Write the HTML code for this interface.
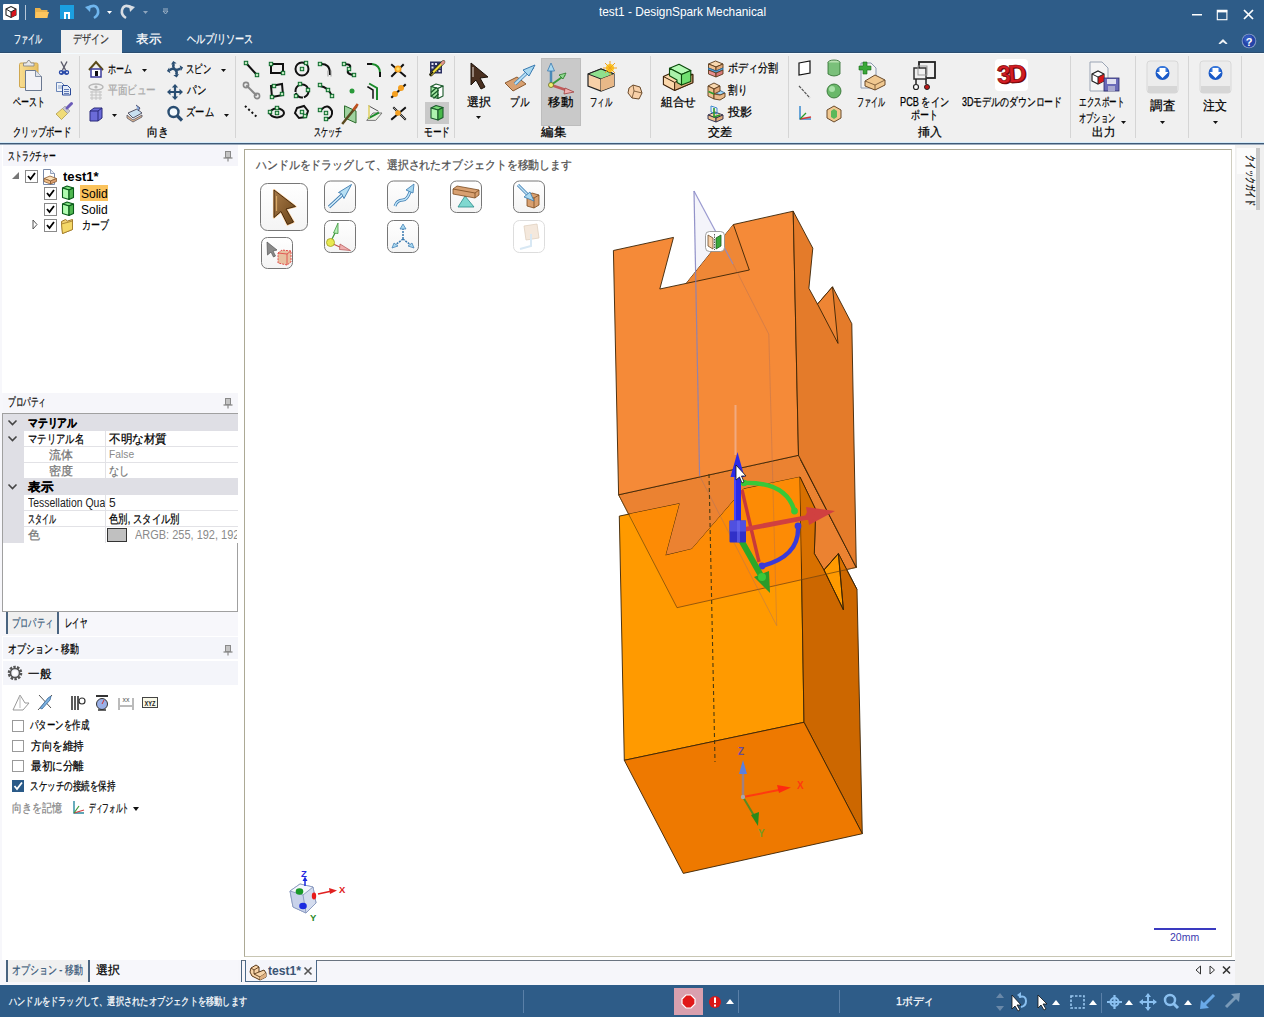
<!DOCTYPE html>
<html><head><meta charset="utf-8">
<style>
*{box-sizing:border-box}
html,body{margin:0;padding:0}
body{width:1264px;height:1017px;overflow:hidden;position:relative;background:#f0f0f0;font-family:"Liberation Sans",sans-serif;font-size:12px;color:#000}
.a{position:absolute}
.t{position:absolute;white-space:nowrap;line-height:1}
.rl{font-size:12px;color:#000}
.t{-webkit-text-stroke:0.25px currentColor}
.ns{-webkit-text-stroke:0}
</style></head><body>
<!-- ===== TITLE BAR ===== -->
<div class="a" style="left:0;top:0;width:1264px;height:52px;background:#2e5c88"></div>
<div class="a" style="left:0;top:52px;width:1264px;height:1px;background:#2b4d70"></div>
<svg class="a" style="left:0;top:0" width="180" height="26">
 <rect x="3" y="4" width="16" height="16" rx="1" fill="#fff"/>
 <path d="M6 9 L11 6.5 L16 9 L16 15 L11 17.5 L6 15 Z" fill="#fff" stroke="#222" stroke-width="1.1"/>
 <path d="M11 12 L16 9 L16 15 L11 17.5 Z" fill="#d8141c"/>
 <path d="M6 9 L11 12 L16 9 M11 12 V17.5" fill="none" stroke="#222" stroke-width="1"/>
 <rect x="25" y="5" width="1" height="15" fill="#b7c7d8"/>
 <path d="M35 8 h5 l1.5 2 h6 v8 h-12.5z" fill="#e9b14d"/>
 <path d="M36 12 h13 l-2 6 h-12z" fill="#fdc55e"/>
 <rect x="60" y="5" width="14" height="14" fill="#1b9fe0"/>
 <rect x="64" y="12" width="6" height="7" fill="#fff"/>
 <rect x="66" y="14" width="2" height="5" fill="#1b9fe0"/>
 <path d="M88 8 Q96 3 98 10 Q99 15 94 18" fill="none" stroke="#6fb6ee" stroke-width="2.6"/>
 <path d="M85 7 L91 5 L90 12 Z" fill="#6fb6ee"/>
 <path d="M107 11 h5 l-2.5 3z" fill="#fff"/>
 <path d="M132 8 Q124 3 122 10 Q121 15 126 18" fill="none" stroke="#d8dde3" stroke-width="2.6"/>
 <path d="M135 7 L129 5 L130 12 Z" fill="#d8dde3"/>
 <path d="M143 11 h5 l-2.5 3z" fill="#8fa6bd"/>
 <path d="M163 9 h5 M163 11 l2.5 3 2.5-3z" stroke="#9fb3c7" fill="none" stroke-width="1"/>
</svg>
<div class="t ns" style="left:599px;top:6px;color:#fff;font-size:12.2px;--w:167px">test1 - DesignSpark Mechanical</div>
<svg class="a" style="left:1180px;top:0" width="84" height="52">
 <rect x="12" y="14" width="10" height="1.5" fill="#fff"/>
 <rect x="37.3" y="10.3" width="9.6" height="9.4" fill="none" stroke="#fff" stroke-width="1.1"/>
 <rect x="37" y="10" width="10.2" height="2.4" fill="#fff"/>
 <path d="M64 10 L73 19 M73 10 L64 19" stroke="#fff" stroke-width="1.7"/>
 <path d="M39 43.5 L43 39.5 L47 43.5 L45.5 43.5 L43 41.5 L40.5 43.5Z" fill="#fff" stroke="#fff" stroke-width="0.8"/>
 <circle cx="69" cy="41" r="7.3" fill="#8aa0c8"/>
 <circle cx="69" cy="41" r="6.4" fill="#2444a8"/>
 <circle cx="68" cy="39" r="4" fill="#3a64c8" opacity="0.7"/>
 <text x="69" y="45.5" font-size="11" font-weight="bold" fill="#fff" text-anchor="middle" font-family="Liberation Sans">?</text>
</svg>
<!-- tabs -->
<div class="t" style="left:14px;top:33px;color:#fff;font-size:12px;--w:28px">ファイル</div>
<div class="a" style="left:61px;top:30px;width:61px;height:24px;background:#f0f0f0"></div>
<div class="t" style="left:73px;top:33px;color:#333;font-size:12px;--w:36px">デザイン</div>
<div class="t" style="left:136px;top:33px;color:#fff;font-size:12px;--w:25px">表示</div>
<div class="t" style="left:187px;top:33px;color:#fff;font-size:12px;--w:66px">ヘルプ/リソース</div>
<!-- ===== RIBBON ===== -->
<div class="a" style="left:0;top:53px;width:1264px;height:1px;background:#f4fbff"></div>
<div class="a" style="left:0;top:142px;width:1264px;height:1px;background:#d6ecfa"></div>
<div class="a" style="left:0;top:143px;width:1264px;height:1px;background:#3f5a78"></div><div class="a" style="left:0;top:144px;width:1264px;height:1px;background:#9aabbd"></div>
<!-- separators -->
<div class="a" style="left:79px;top:56px;width:1px;height:82px;background:#d5d5d5"></div>
<div class="a" style="left:235px;top:56px;width:1px;height:82px;background:#d5d5d5"></div>
<div class="a" style="left:417px;top:56px;width:1px;height:82px;background:#d5d5d5"></div>
<div class="a" style="left:454px;top:56px;width:1px;height:82px;background:#d5d5d5"></div>
<div class="a" style="left:650px;top:56px;width:1px;height:82px;background:#d5d5d5"></div>
<div class="a" style="left:788px;top:56px;width:1px;height:82px;background:#d5d5d5"></div>
<div class="a" style="left:1070px;top:56px;width:1px;height:82px;background:#d5d5d5"></div>
<div class="a" style="left:1135px;top:56px;width:1px;height:82px;background:#d5d5d5"></div>
<div class="a" style="left:1188px;top:56px;width:1px;height:82px;background:#d5d5d5"></div>
<div class="a" style="left:1241px;top:56px;width:1px;height:82px;background:#d5d5d5"></div>
<!-- group labels -->
<div class="t rl" style="left:13px;top:126px;--w:58px">クリップボード</div>
<div class="t rl" style="left:147px;top:126px;--w:22px">向き</div>
<div class="t rl" style="left:314px;top:126px;--w:28px">スケッチ</div>
<div class="t rl" style="left:424px;top:126px;--w:26px">モード</div>
<div class="t rl" style="left:541px;top:126px;--w:25px">編集</div>
<div class="t rl" style="left:708px;top:126px;--w:24px">交差</div>
<div class="t rl" style="left:918px;top:126px;--w:24px">挿入</div>
<div class="t rl" style="left:1092px;top:126px;--w:23px">出力</div>
<!-- clipboard -->
<svg class="a" style="left:0;top:53px" width="80" height="75">
 <defs><linearGradient id="clipg" x1="0" y1="0" x2="1" y2="0"><stop offset="0" stop-color="#f8dc90"/><stop offset="1" stop-color="#e8c060"/></linearGradient></defs>
 <rect x="19.5" y="10" width="18.5" height="24.5" rx="1.5" fill="url(#clipg)" stroke="#d0a850" stroke-width="1"/>
 <path d="M23.5 13 v-3 h3 l1.5 -2.5 h1.5 l1.5 2.5 h3 v3 z" fill="#e8e8e8" stroke="#8a8a8a" stroke-width="0.9"/>
 <path d="M25.5 17.5 h10 l6 6 v14 h-16z" fill="#f2f2f6" stroke="#6a7890" stroke-width="1"/>
 <path d="M35.5 17.5 v6 h6" fill="#dfe3ea" stroke="#6a7890" stroke-width="0.8"/>
 <path d="M61 8.5 L65.5 17 M67 8.5 L62.5 17" stroke="#5a5a6a" stroke-width="1.4"/>
 <ellipse cx="61.5" cy="19.5" rx="2.6" ry="2.4" fill="#2a4aa8"/><ellipse cx="66.5" cy="19.5" rx="2.6" ry="2.4" fill="#2a4aa8"/>
 <circle cx="61" cy="19.3" r="0.9" fill="#fff"/><circle cx="67" cy="19.3" r="0.9" fill="#fff"/>
 <path d="M56.5 29.5 h5 l2.5 2.5 v6.5 h-7.5z" fill="#f0f4fa" stroke="#5a78b0" stroke-width="0.9"/>
 <path d="M58 33 h4 M58 35 h4" stroke="#5a78b0" stroke-width="0.7"/>
 <path d="M62.5 32.5 h5 l3 3 v6.5 h-8z" fill="#e4ecf8" stroke="#2a4a98" stroke-width="1"/>
 <path d="M64 36.5 h5 M64 38.5 h5 M64 40.5 h5" stroke="#2a4a98" stroke-width="0.7"/>
 <path d="M56 61 L62.5 55.5 L67.5 60.5 L61.5 66.5 Z" fill="#f0dc78" stroke="#a89040" stroke-width="0.7"/>
 <path d="M62.5 55.5 L65 53 L70 58 L67.5 60.5Z" fill="#c8c8d0" stroke="#888" stroke-width="0.5"/>
 <path d="M67 55 L71.5 50.5" stroke="#6a5ab8" stroke-width="3" stroke-linecap="round"/>
</svg>
<div class="t rl" style="left:13px;top:96px;--w:32px">ペースト</div>
<!-- orientation -->
<svg class="a" style="left:80px;top:53px" width="155" height="75">
 <path d="M9 17 L16 9 L23 17" fill="none" stroke="#5a4a1a" stroke-width="2"/>
 <rect x="11" y="16" width="10" height="8" fill="#fff" stroke="#3a3a9a" stroke-width="1.5"/>
 <rect x="15" y="18" width="3" height="5" fill="#111"/>
 <path d="M62 16 l5 0 -2.5 3z" fill="#111"/>
 <ellipse cx="16" cy="34" rx="7" ry="3" fill="none" stroke="#b8b8b8" stroke-width="1.5"/>
 <circle cx="16" cy="34" r="1.6" fill="#b8b8b8"/>
 <path d="M10 39 h12 M10 42 h12 M10 45 h12 M12 38 v9 M16 38 v9 M20 38 v9" stroke="#c4c4c4" stroke-width="1"/>
 <path d="M10 58 L14 55 L22 55 L22 65 L18 68 L10 68 Z" fill="#6b6bd8" stroke="#2a2a7a" stroke-width="1"/>
 <path d="M10 58 L18 58 L22 55 M18 58 V68" fill="none" stroke="#2a2a7a" stroke-width="1"/>
 <path d="M32 61 l5 0 -2.5 3z" fill="#111"/>
 <path d="M48 60 L57 56 L62 60 L53 65 Z" fill="#c8e0f0" stroke="#556" stroke-width="1"/>
 <path d="M47 62 L53 67 L62 62 L62 64 L53 69 L47 65Z" fill="#e0b890" stroke="#556" stroke-width="0.8"/>
 <path d="M56 52 L60 55 L58 58" fill="#88aadd" stroke="#335" stroke-width="0.8"/>
 <g transform="translate(95 16.3) scale(0.72) rotate(-12) translate(-95 -16.3)">
  <path d="M95 16.3 Q92 12 95 8.5 M95 16.3 Q99 19 102.5 16.3 M95 16.3 Q98 20.5 95 24 M95 16.3 Q91 13.5 87.5 16.3" fill="none" stroke="#2a4e72" stroke-width="3.4"/>
  <path d="M91 8.5 L99 8.5 L95 4.5Z M102.5 12.3 L102.5 20.3 L106.5 16.3Z M91 24 L99 24 L95 28Z M87.5 12.3 L87.5 20.3 L83.5 16.3Z" fill="#2a4e72"/>
 </g>
 <path d="M141 16 l5 0 -2.5 3z" fill="#111"/>
 <path d="M95 33 V45 M89 39 H101" stroke="#2a4e72" stroke-width="2.2"/>
 <path d="M95 31 l-3.2 3.5 6.4 0z M95 47 l-3.2 -3.5 6.4 0z M87 39 l3.5 -3.2 0 6.4z M103 39 l-3.5 -3.2 0 6.4z" fill="#2a4e72"/>
 <circle cx="93.5" cy="59" r="5" fill="#f4fbff" stroke="#2a4e72" stroke-width="2.4"/>
 <path d="M97.5 63 L102 67.5" stroke="#2a4e72" stroke-width="3.2"/>
 <path d="M144 61 l5 0 -2.5 3z" fill="#111"/>
</svg>
<div class="t rl" style="left:108px;top:63px;--w:24px">ホーム</div>
<div class="t rl" style="left:108px;top:84px;color:#a8a8a8;--w:48px">平面ビュー</div>
<div class="t rl" style="left:186px;top:63px;--w:25px">スピン</div>
<div class="t rl" style="left:187px;top:84px;--w:19px">パン</div>
<div class="t rl" style="left:186px;top:106px;--w:28px">ズーム</div>
<!-- sketch -->
<svg class="a" style="left:236px;top:53px" width="218" height="75" stroke-linecap="square">
 <defs><g id="gs"><rect x="-1.7" y="-1.7" width="3.4" height="3.4" fill="#bfe8bf" stroke="#0a6a2a" stroke-width="1"/></g></defs>
 <!-- row1 -->
 <path d="M10 10 L21 22" stroke="#111" stroke-width="2"/><use href="#gs" x="10" y="10"/><use href="#gs" x="21" y="22"/>
 <rect x="35" y="11" width="12" height="9" fill="none" stroke="#111" stroke-width="2"/><use href="#gs" x="35" y="11"/><use href="#gs" x="47" y="20"/>
 <circle cx="66" cy="16" r="6.5" fill="none" stroke="#111" stroke-width="2"/><use href="#gs" x="66" y="16"/><use href="#gs" x="70" y="10"/>
 <path d="M84 11 Q94 10 94 21" fill="none" stroke="#111" stroke-width="2"/><use href="#gs" x="84" y="11"/><path d="M92 18 v5 M95 18 v5" stroke="#999" stroke-width="1"/>
 <path d="M108 11 Q117 11 113 16 Q109 21 118 22" fill="none" stroke="#111" stroke-width="2"/><use href="#gs" x="108" y="11"/><use href="#gs" x="113" y="16"/><use href="#gs" x="118" y="22"/>
 <path d="M132 11 h4 Q144 12 144 20 v3" fill="none" stroke="#1a8a2a" stroke-width="2"/><path d="M132 11h3 M144 20 v3" stroke="#111" stroke-width="2"/>
 <path d="M156 12 L169 23 M167 12 L156 23" stroke="#111" stroke-width="2"/><circle cx="162" cy="16" r="3.5" fill="#f5a020"/><circle cx="162" cy="16" r="1.8" fill="#ffe060"/>
 <!-- row2 -->
 <path d="M11 33 L20 42" stroke="#888" stroke-width="2"/><circle cx="10" cy="32" r="2.6" fill="none" stroke="#888" stroke-width="1.6"/><circle cx="21" cy="43" r="2.6" fill="none" stroke="#888" stroke-width="1.6"/>
 <path d="M35 33 L46 31 L47 42 L36 44 Z" fill="none" stroke="#111" stroke-width="2"/><use href="#gs" x="38" y="33"/><use href="#gs" x="46" y="41"/><use href="#gs" x="36" y="44"/>
 <circle cx="66" cy="38" r="6.5" fill="none" stroke="#111" stroke-width="2" stroke-dasharray="7 3"/><use href="#gs" x="60" y="43"/><use href="#gs" x="72" y="37"/><use href="#gs" x="64" y="31"/>
 <path d="M84 33 Q92 34 96 43" fill="none" stroke="#111" stroke-width="2"/><use href="#gs" x="84" y="32"/><use href="#gs" x="92" y="37"/><use href="#gs" x="96" y="43"/>
 <circle cx="116" cy="38" r="2.5" fill="#2a9a3a"/>
 <path d="M132 34 l5 3 v8" fill="none" stroke="#111" stroke-width="1.5"/><path d="M134 31 l7 4 v11" fill="none" stroke="#1a8a2a" stroke-width="2"/>
 <path d="M156 44 L169 32" stroke="#111" stroke-width="2"/><circle cx="159" cy="41" r="3" fill="#f5a020"/><circle cx="165" cy="35" r="3" fill="#f5a020"/>
 <!-- row3 -->
 <path d="M9 53 L22 65" stroke="#111" stroke-width="2" stroke-dasharray="2 2.5" stroke-linecap="butt"/>
 <ellipse cx="41" cy="60" rx="7" ry="4.5" fill="none" stroke="#111" stroke-width="2"/><use href="#gs" x="34" y="59"/><use href="#gs" x="41" y="60"/><use href="#gs" x="41" y="55"/>
 <path d="M61 55 L68 53 L72 58 L70 64 L63 65 L59 60Z" fill="none" stroke="#111" stroke-width="2"/><use href="#gs" x="66" y="59"/><use href="#gs" x="69" y="63"/>
 <path d="M86 56 Q92 50 96 58 Q97 65 90 66" fill="none" stroke="#111" stroke-width="2"/><use href="#gs" x="84" y="57"/><use href="#gs" x="90" y="60"/><use href="#gs" x="90" y="66"/>
 <path d="M109 53 L120 58 L120 70 L109 65 Z" fill="#9fd29f" stroke="#2a6a2a" stroke-width="1"/><path d="M107 70 L120 54" stroke="#5a4a20" stroke-width="2.5"/><path d="M118 56 L121 52" stroke="#c05020" stroke-width="2.5"/>
 <path d="M131 67 L137 60 L146 60 L140 67 Z" fill="#e8f0e0" stroke="#777" stroke-width="1"/><path d="M133 65 L142 60" stroke="#1a8a2a" stroke-width="2"/><path d="M133 53 L142 58" stroke="#555" stroke-width="1"/><path d="M133 53 v12" stroke="#e0d060" stroke-width="1.5"/>
 <path d="M156 66 L169 55 M158 55 L169 66" stroke="#111" stroke-width="2"/><path d="M158 55 L169 66" stroke="#999" stroke-width="1"/><circle cx="162" cy="60" r="2.8" fill="#f5a020"/>
 <!-- mode -->
 <rect x="189" y="49" width="24" height="22" fill="#c9c9c9"/>
 <rect x="194" y="8.5" width="12" height="12" fill="#2a3060"/>
 <path d="M195.5 10 h2 v2 h-2z M199 10 h2 v2 h-2z M195.5 13.5 h2 v2 h-2z M202.5 13.5 h2 v2 h-2z M199 17 h2 v2 h-2z M202.5 17 h2 v2 h-2z" fill="#e0e0f0"/>
 <path d="M195 21.5 L207.5 9" stroke="#2a2a10" stroke-width="3.6" stroke-linecap="round"/>
 <path d="M195.5 21 L207 9.5" stroke="#f0e040" stroke-width="2.2"/>
 <path d="M206 10.5 L207.5 9" stroke="#e09090" stroke-width="2.4"/>
 <path d="M194.5 21.5 L196.5 19.5" stroke="#111" stroke-width="1.5"/>
 <g stroke="#1a5a2a" stroke-width="1.1" stroke-linejoin="round">
  <path d="M195 33.5 L200 31 L207 33 L202 35.5 Z" fill="#fff"/>
  <path d="M195 33.5 L202 35.5 V45.5 L195 43.5 Z" fill="#a8eca8"/>
  <path d="M202 35.5 L207 33 V43 L202 45.5 Z" fill="#fff"/>
 </g>
 <path d="M195.5 39 L200 35 M195.5 43 L202 37.5 M198 45 L202 41.5" stroke="#1a5a2a" stroke-width="1.4"/>
 <g stroke="#1a5a2a" stroke-width="1.1" stroke-linejoin="round">
  <path d="M195 55 L200 52.5 L207 54.5 L202 57 Z" fill="#78d878"/>
  <path d="M195 55 L202 57 V67 L195 65 Z" fill="#aef4ae"/>
  <path d="M202 57 L207 54.5 V64.5 L202 67 Z" fill="#4ab84a"/>
 </g>
</svg>
<!-- edit -->
<div class="a" style="left:541px;top:58px;width:40px;height:68px;background:#c9c9c9;border:1px solid #bdbdbd"></div>
<svg class="a" style="left:455px;top:53px" width="195" height="75">
 <path d="M16 10 L33 24 L25 25 L30 34 L26 36 L21 27 L16 32 Z" fill="#4a3020" stroke="#1a1008" stroke-width="1"/>
 <path d="M18 14 v10" stroke="#e0d8d0" stroke-width="1"/>
 <path d="M50 30 L62 24 L71 31 L58 38 Z" fill="#d8a070" stroke="#8a5a30" stroke-width="1"/>
 <path d="M60 31 L78 14" stroke="#4a8ab8" stroke-width="3.5"/><path d="M60 31 L78 14" stroke="#b8e0f8" stroke-width="1.8"/><path d="M80 12 L68 17 L74 23 Z" fill="#a8d8f0" stroke="#3a7ab0" stroke-width="1"/>
 <path d="M96 32 V14" stroke="#4a8ab8" stroke-width="2.5"/><path d="M96 10 l-3.5 8 7 0z" fill="#a8d8f0" stroke="#3a7ab0" stroke-width="0.8"/>
 <path d="M96 32 L110 22" stroke="#3a9a3a" stroke-width="2"/><path d="M111 20 l-7 2 4 4z" fill="#8fd88f" stroke="#2a7a2a" stroke-width="0.8"/>
 <path d="M96 32 L114 38" stroke="#c05a5a" stroke-width="2.5"/><path d="M119 39 l-9 -4 -1 6z" fill="#f0b0b0" stroke="#a04040" stroke-width="0.8"/>
 <circle cx="96" cy="32" r="2.5" fill="#f0f070" stroke="#6a6a20" stroke-width="0.8"/>
 <path d="M133 21 L146 16 L159 21 L159 33 L146 38 L133 33 Z" fill="#f8d0a8" stroke="#222" stroke-width="1.2"/>
 <path d="M133 21 L146 16 L159 21 L146 26 Z" fill="#8ee08e" stroke="#222" stroke-width="1"/><path d="M146 26 V38" stroke="#222" stroke-width="1"/><path d="M146 26 L159 21 V33 L146 38Z" fill="#e8b888"/>
 <circle cx="155" cy="15" r="4" fill="#ffd020"/><path d="M155 8 v14 M148 15 h14 M150 10 l10 10 M160 10 l-10 10" stroke="#f0a020" stroke-width="1"/>
 <path d="M174 35 L178 32 L185 34 L187 40 L184 46 L177 45 L173 40 Z" fill="#f8d0a8" stroke="#6a4a2a" stroke-width="1"/><path d="M178 32 L179 38 L187 40 M179 38 L177 45" stroke="#6a4a2a" stroke-width="0.8" fill="none"/>
 <path d="M21 63 l5 0 -2.5 3z" fill="#111"/>
</svg>
<div class="t rl" style="left:467px;top:96px;--w:24px">選択</div>
<div class="t rl" style="left:510px;top:96px;--w:19px">プル</div>
<div class="t rl" style="left:548px;top:96px;--w:25px">移動</div>
<div class="t rl" style="left:590px;top:96px;--w:22px">フィル</div>
<!-- intersect -->
<svg class="a" style="left:651px;top:53px" width="137" height="75">
 <g stroke-linejoin="round">
 <path d="M12.4,23.5 L18,21 L41.8,21.4 L41.8,29.7 L23.6,37.4 L12.4,31.5 Z" fill="#fcd8ac" stroke="#3a2008" stroke-width="1.1"/>
 <path d="M23.6,29.4 L41.8,21.4 L41.8,29.7 L23.6,37.4 Z" fill="#e0b080" stroke="#3a2008" stroke-width="1"/>
 <path d="M12.4,23.5 L23.6,29.4" stroke="#3a2008" stroke-width="1"/>
 <path d="M18.5,15.2 L28,11.2 L39.8,17.5 L30.5,21.4 Z" fill="#b4fab4" stroke="#0a4a0a" stroke-width="1.1"/>
 <path d="M18.5,15.2 L30.5,21.4 L30.5,31.9 L26,29.5 L26,27 L18.5,22.8 Z" fill="#aaf2aa" stroke="#0a4a0a" stroke-width="1.1"/>
 <path d="M30.5,21.4 L39.8,17.5 L39.8,28.6 L30.5,31.9 Z" fill="#70e070" stroke="#0a4a0a" stroke-width="1.1"/>
 </g>
 <g stroke="#5a3a1a" stroke-width="0.9" stroke-linejoin="round">
 <path d="M57.5 11 L64.5 8 L72 11 L65 14 Z" fill="#f8d8b0"/>
 <path d="M57.5 11 L65 14 V18 L57.5 15 Z" fill="#f0c090"/><path d="M65 14 L72 11 V15 L65 18 Z" fill="#e0a878"/>
 <path d="M57.5 15 L65 18 L72 15 V17 L65 20 L57.5 17 Z" fill="#5aaae0" stroke="#2a6a9a"/>
 <path d="M57.5 17 L65 20 V24 L57.5 21 Z" fill="#e89090"/><path d="M65 20 L72 17 V21 L65 24 Z" fill="#d87878"/>
 <path d="M57 33 L63 30 L69 33 L63 36 Z" fill="#f8d8b0"/>
 <path d="M57 33 L63 36 V46 L57 43 Z" fill="#f0c090"/>
 <path d="M63 39 L68 37 L74 40 L69 42 Z" fill="#a0d8f8" stroke="#3a6a9a"/>
 <path d="M63 36 L69 33 V38 L63 41 Z" fill="#e0a878"/>
 <path d="M63 41 L69 42 L74 40 V44 L69 47 L63 46 Z" fill="#e8b888"/>
 <path d="M57.5 38.5 L63 41" stroke="#2a9a2a" stroke-width="1.6"/>
 <path d="M57 62 L64 59 L72 62 L65 65 Z" fill="#f8d8b0" stroke="#2a2a4a"/>
 <path d="M57 62 L65 65 V69 L57 66 Z" fill="#f0c090" stroke="#2a2a4a"/><path d="M65 65 L72 62 V66 L65 69 Z" fill="#e0a878" stroke="#2a2a4a"/>
 </g>
 <path d="M60 53 L66 55 L66 61 L60 59 Z" fill="none" stroke="#3a8ad0" stroke-width="1"/>
 <path d="M63 55 V64 L69 62" fill="none" stroke="#2a9a2a" stroke-width="1.6"/>
</svg>
<div class="t rl" style="left:661px;top:96px;--w:35px">組合せ</div>
<div class="t rl" style="left:728px;top:62px;--w:50px">ボディ分割</div>
<div class="t rl" style="left:728px;top:84px;--w:19px">割り</div>
<div class="t rl" style="left:728px;top:106px;--w:24px">投影</div>
<!-- insert -->
<svg class="a" style="left:789px;top:53px" width="281" height="75">
 <path d="M10 10 L21 8 L21 20 L10 22 Z" fill="#fff" stroke="#111" stroke-width="1.2"/>
 <path d="M10 33 L21 45" stroke="#555" stroke-width="1.2" stroke-dasharray="3 1"/>
 <path d="M11 53 V66 L22 66" fill="none" stroke="#3a8ad0" stroke-width="1.5"/><path d="M11 66 L22 64" stroke="#d03a3a" stroke-width="1.5"/><path d="M11 66 L17 60" stroke="#2a9a2a" stroke-width="1.2"/>
 <ellipse cx="45" cy="9.5" rx="6" ry="2.5" fill="#b8e0b0" stroke="#2a6a2a" stroke-width="0.8"/><path d="M39 9.5 V21 Q45 25 51 21 V9.5" fill="#7ac07a" stroke="#2a6a2a" stroke-width="0.8"/>
 <circle cx="45" cy="38" r="7" fill="#6ab86a" stroke="#2a6a2a" stroke-width="0.8"/><circle cx="43" cy="36" r="3" fill="#a8e0a8"/>
 <path d="M38 57 L45 53 L52 57 V65 L45 69 L38 65 Z" fill="#f0c890" stroke="#6a4a2a" stroke-width="1"/><path d="M42 58 L45 56 L48 58 V64 L45 66 L42 64Z" fill="#5ab85a"/>
 <path d="M72 10 h10 l5 5 v20 h-15 z" fill="#f4f4f4" stroke="#8a98ad" stroke-width="1"/>
 <path d="M70 13 h4 v-4 h4 v4 h4 v4 h-4 v4 h-4 v-4 h-4z" fill="#3aa83a" stroke="#1a6a1a" stroke-width="0.6"/>
 <path d="M76 28 L86 22 L96 27 L96 32 L86 37 L76 33 Z" fill="#f0c890" stroke="#6a4a2a" stroke-width="1"/><path d="M76 28 L86 32 L96 27 M86 32 V37" fill="none" stroke="#6a4a2a" stroke-width="0.8"/>
 <rect x="130" y="9" width="16" height="16" fill="none" stroke="#222" stroke-width="1.8"/>
 <rect x="125" y="15" width="12" height="11" fill="#f0f0f0" stroke="#333" stroke-width="1.5"/>
 <rect x="129" y="13" width="9" height="9" fill="none" stroke="#999" stroke-width="1"/>
 <path d="M127 26 v5 M137 26 v5" stroke="#222" stroke-width="1.5"/>
 <circle cx="127" cy="34" r="2.5" fill="#fff" stroke="#222" stroke-width="1.2"/><circle cx="138" cy="34" r="2.5" fill="#c01818" stroke="#222" stroke-width="1"/>
 <rect x="206" y="6" width="33" height="32" rx="4" fill="#fff"/>
 <text x="222.5" y="30.5" font-family="Liberation Sans" font-weight="bold" font-size="25" fill="#6a0808" text-anchor="middle" letter-spacing="-2.5" transform="rotate(-4 222 24)">3D</text>
 <text x="221.5" y="29.5" stroke="#7a0a0a" stroke-width="0.6" font-family="Liberation Sans" font-weight="bold" font-size="25" fill="#d41c24" text-anchor="middle" letter-spacing="-2.5" transform="rotate(-4 222 24)">3D</text>
</svg>
<div class="t rl" style="left:857px;top:96px;--w:28px">ファイル</div>
<div class="t rl" style="left:900px;top:96px;--w:49px">PCB をイン</div>
<div class="t rl" style="left:911px;top:109px;--w:27px">ポート</div>
<div class="t rl" style="left:962px;top:96px;--w:100px">3Dモデルのダウンロード</div>
<!-- output -->
<svg class="a" style="left:1071px;top:53px" width="193" height="75">
 <path d="M19 9 h12 l6 6 v23 h-18 z" fill="#f4f4f4" stroke="#9aa4b4" stroke-width="1"/>
 <path d="M21 21 L27 18 L33 21 L33 28 L27 31 L21 28 Z" fill="#fff" stroke="#222" stroke-width="1.2"/><path d="M27 24 L33 21 V28 L27 31Z" fill="#d81818"/><path d="M21 21 L27 24 L33 21 M27 24 V31" fill="none" stroke="#222" stroke-width="1"/>
 <rect x="33" y="25" width="15" height="13" fill="#6a6ab8" stroke="#2a2a6a" stroke-width="0.8"/><rect x="36" y="26" width="9" height="5" fill="#e0e0f0"/><rect x="37" y="33" width="7" height="5" fill="#a8a8d0"/>
 <path d="M50 68 l5 0 -2.5 3z" fill="#111"/>
 <rect x="76" y="8" width="31" height="32" rx="3" fill="#ececec" stroke="#d8d8d8" stroke-width="1"/><rect x="77" y="33" width="29" height="7" fill="#d6d6d6"/>
 <circle cx="91.5" cy="20" r="7" fill="#1a5ac8"/><circle cx="91.5" cy="18" r="5" fill="#4a8ae8" opacity="0.6"/><path d="M88.5 15 h6 v4 h3 l-6 6 -6 -6 h3z" fill="#fff"/>
 <path d="M89 68 l5 0 -2.5 3z" fill="#111"/>
 <rect x="129" y="8" width="31" height="32" rx="3" fill="#ececec" stroke="#d8d8d8" stroke-width="1"/><rect x="130" y="33" width="29" height="7" fill="#d6d6d6"/>
 <circle cx="144.5" cy="20" r="7" fill="#1a5ac8"/><circle cx="144.5" cy="18" r="5" fill="#4a8ae8" opacity="0.6"/><path d="M141.5 15 h6 v4 h3 l-6 6 -6 -6 h3z" fill="#fff"/>
 <path d="M142 68 l5 0 -2.5 3z" fill="#111"/>
</svg>
<div class="t rl" style="left:1079px;top:96px;--w:45px">エクスポート</div>
<div class="t rl" style="left:1079px;top:112px;--w:36px">オプション</div>
<div class="t rl" style="left:1150px;top:99px;font-size:13px;--w:25px">調査</div>
<div class="t rl" style="left:1203px;top:99px;font-size:13px;--w:24px">注文</div>
<!-- ===== LEFT PANEL ===== -->
<div class="a" style="left:0;top:145px;width:244px;height:840px;background:#f7f7fb"></div><div class="a" style="left:238px;top:145px;width:6px;height:815px;background:#fff"></div>
<div class="a" style="left:2px;top:145px;width:238px;height:248px;background:#fff"></div>
<div class="a" style="left:3px;top:145px;width:235px;height:21px;background:#f5f5fa"></div>
<div class="t rl" style="left:8px;top:150px;--w:48px">ストラクチャー</div>
<svg class="a" style="left:222px;top:150px" width="12" height="12"><rect x="3.5" y="1.5" width="5" height="6" fill="#c4c4c4" stroke="#8a8a8a" stroke-width="1"/><path d="M1.5 8 h9" stroke="#8a8a8a" stroke-width="1.3"/><path d="M6 8 v3.5" stroke="#8a8a8a" stroke-width="1.2"/></svg>
<!-- tree -->
<svg class="a" style="left:0;top:166px" width="240" height="70">
 <path d="M19 6 L19 13 L12 13 Z" fill="#777"/>
 <rect x="25.5" y="4.5" width="12" height="12" fill="#fff" stroke="#8a8a8a"/>
 <path d="M28 10 L30.5 13 L35 7" fill="none" stroke="#000" stroke-width="1.8"/>
 <path d="M43.5 3.5 h7 l4 4 v11 h-11z" fill="#fff" stroke="#7a8aa8" stroke-width="1"/>
 <path d="M50.5 3.5 v4 h4" fill="#e8ecf4" stroke="#7a8aa8" stroke-width="0.8"/>
 <path d="M44 12.5 L50 10 L56.5 12.5 L50.5 15 Z" fill="#fce0b8" stroke="#8a5a30" stroke-width="0.8"/>
 <path d="M44 12.5 L50.5 15 V18 L44 15.5Z" fill="#f0c08a" stroke="#8a5a30" stroke-width="0.8"/>
 <path d="M50.5 15 L56.5 12.5 V15.5 L50.5 18Z" fill="#dca070" stroke="#8a5a30" stroke-width="0.8"/>
 <rect x="44.5" y="21.5" width="12" height="12" fill="#fff" stroke="#8a8a8a"/>
 <path d="M47 27 L49.5 30 L54 24" fill="none" stroke="#000" stroke-width="1.8"/>
 <g stroke="#0a5a1a" stroke-width="1.1" stroke-linejoin="round"><path d="M62.5 22 L67 20 L73.5 22 L69 24 Z" fill="#80e080"/><path d="M62.5 22 L69 24 V33.5 L62.5 31.5 Z" fill="#b0fcb0"/><path d="M69 24 L73.5 22 V31.5 L69 33.5 Z" fill="#50b850"/></g>
 <rect x="44.5" y="37.5" width="12" height="12" fill="#fff" stroke="#8a8a8a"/>
 <path d="M47 43 L49.5 46 L54 40" fill="none" stroke="#000" stroke-width="1.8"/>
 <g stroke="#0a5a1a" stroke-width="1.1" stroke-linejoin="round"><path d="M62.5 38 L67 36 L73.5 38 L69 40 Z" fill="#80e080"/><path d="M62.5 38 L69 40 V49.5 L62.5 47.5 Z" fill="#b0fcb0"/><path d="M69 40 L73.5 38 V47.5 L69 49.5 Z" fill="#50b850"/></g>
 <path d="M33 54 L37 58.5 L33 63 Z" fill="#fff" stroke="#555" stroke-width="1"/>
 <rect x="44.5" y="53.5" width="12" height="12" fill="#fff" stroke="#8a8a8a"/>
 <path d="M47 59 L49.5 62 L54 56" fill="none" stroke="#000" stroke-width="1.8"/>
 <path d="M61.5 55.5 l4 -2 l2 1.5 l5 -1.5 v10 l-10 4 z" fill="#f0d070" stroke="#a07828" stroke-width="1"/>
 <path d="M61.5 58 l11 -3 v8.5 l-10 4 z" fill="#f4d868" stroke="#a07828" stroke-width="0.8"/>
</svg>
<div class="t ns" style="left:63px;top:171px;font-weight:bold;font-size:12px;--w:36px">test1*</div>
<div class="a" style="left:80px;top:185px;width:28px;height:16px;background:#fbc35c"></div>
<div class="t ns" style="left:81px;top:188px;font-size:12px;--w:27px">Solid</div>
<div class="t ns" style="left:81px;top:204px;font-size:12px;--w:27px">Solid</div>
<div class="t" style="left:82px;top:219px;font-size:12px;--w:27px">カーブ</div>
<!-- properties -->
<div class="a" style="left:3px;top:393px;width:235px;height:19px;background:#f6f6fa"></div>
<div class="t rl" style="left:8px;top:396px;--w:38px">プロパティ</div>
<svg class="a" style="left:222px;top:397px" width="12" height="12"><rect x="3.5" y="1.5" width="5" height="6" fill="#c4c4c4" stroke="#8a8a8a" stroke-width="1"/><path d="M1.5 8 h9" stroke="#8a8a8a" stroke-width="1.3"/><path d="M6 8 v3.5" stroke="#8a8a8a" stroke-width="1.2"/></svg>
<div class="a" style="left:2px;top:413px;width:236px;height:199px;background:#fff;border:1px solid #a0a0a0"></div>
<div class="a" style="left:3px;top:414px;width:235px;height:129px;background:#dfdfe5"></div>
<div class="a" style="left:24px;top:431px;width:214px;height:47px;background:#fff"></div>
<div class="a" style="left:24px;top:495px;width:214px;height:48px;background:#fff"></div>
<div class="a" style="left:24px;top:446px;width:214px;height:1px;background:#e2e2e6"></div>
<div class="a" style="left:24px;top:462px;width:214px;height:1px;background:#e2e2e6"></div>
<div class="a" style="left:24px;top:510px;width:214px;height:1px;background:#e2e2e6"></div>
<div class="a" style="left:24px;top:526px;width:214px;height:1px;background:#e2e2e6"></div>
<div class="a" style="left:105px;top:431px;width:1px;height:47px;background:#e2e2e6"></div>
<div class="a" style="left:105px;top:495px;width:1px;height:48px;background:#e2e2e6"></div>
<svg class="a" style="left:0;top:414px" width="24" height="130">
 <path d="M8.5 6.5 L12.5 10.5 L16.5 6.5 M8.5 22.5 L12.5 26.5 L16.5 22.5 M8.5 70.5 L12.5 74.5 L16.5 70.5" fill="none" stroke="#444" stroke-width="1.6"/>
</svg>
<div class="t" style="left:28px;top:417px;font-weight:bold;--w:49px">マテリアル</div>
<div class="t" style="left:28px;top:433px;--w:56px">マテリアル名</div>
<div class="t" style="left:109px;top:433px;--w:58px">不明な材質</div>
<div class="t" style="left:49px;top:449px;color:#777;--w:24px">流体</div>
<div class="t ns" style="left:109px;top:449px;color:#8a8a8a;font-size:11.5px;--w:25px">False</div>
<div class="t" style="left:49px;top:465px;color:#777;--w:24px">密度</div>
<div class="t" style="left:109px;top:465px;color:#777;--w:20px">なし</div>
<div class="t" style="left:28px;top:481px;font-weight:bold;--w:25px">表示</div>
<div class="a" style="left:28px;top:496px;width:77px;height:14px;overflow:hidden"><div class="t ns" style="left:0;top:1px;font-size:12px;color:#222;transform-origin:0 0;transform:scaleX(0.87)">Tessellation Quality</div></div>
<div class="t ns" style="left:109px;top:497px;color:#222">5</div>
<div class="t" style="left:28px;top:513px;--w:28px">スタイル</div>
<div class="t" style="left:109px;top:513px;--w:71px">色別, スタイル別</div>
<div class="t" style="left:28px;top:529px;color:#777;--w:12px">色</div>
<div class="a" style="left:107px;top:528px;width:20px;height:14px;background:#c0c0c0;border:1px solid #333"></div>
<div class="a" style="left:135px;top:528px;width:102px;height:14px;overflow:hidden"><div class="t ns" style="left:0;top:1px;font-size:12px;color:#8a8a8a;transform-origin:0 0;transform:scaleX(0.915)">ARGB: 255, 192, 192, 192</div></div>
<!-- panel tabs -->
<div class="a" style="left:6px;top:612px;width:53px;height:22px;background:#f0f0f0;border-left:2px solid #4a6480;border-right:2px solid #4a6480"></div>
<div class="t" style="left:12px;top:617px;color:#3a5a7a;--w:41px">プロパティ</div>
<div class="t" style="left:65px;top:617px;--w:22px">レイヤ</div>
<!-- options -->
<div class="a" style="left:2px;top:636px;width:238px;height:324px;background:#fff"></div>
<div class="a" style="left:3px;top:637px;width:235px;height:22px;background:#f4f5fa"></div>
<div class="t rl" style="left:8px;top:643px;--w:71px">オプション - 移動</div>
<svg class="a" style="left:222px;top:644px" width="12" height="12"><rect x="3.5" y="1.5" width="5" height="6" fill="#c4c4c4" stroke="#8a8a8a" stroke-width="1"/><path d="M1.5 8 h9" stroke="#8a8a8a" stroke-width="1.3"/><path d="M6 8 v3.5" stroke="#8a8a8a" stroke-width="1.2"/></svg>
<div class="a" style="left:3px;top:661px;width:235px;height:24px;background:#f4f5fa"></div>
<svg class="a" style="left:5px;top:663px" width="20" height="20"><circle cx="10" cy="10" r="6" fill="none" stroke="#555" stroke-width="2.6" stroke-dasharray="2.4 1.3"/><circle cx="10" cy="10" r="4.5" fill="none" stroke="#555" stroke-width="1.6"/><circle cx="10" cy="10" r="2.2" fill="#fff"/></svg>
<div class="t rl" style="left:28px;top:668px;--w:23px">一般</div>
<svg class="a" style="left:0;top:690px" width="170" height="130">
 <path d="M13 20 L20 5 L25 13 L29 13 L23 20 Z" fill="none" stroke="#999" stroke-width="1"/><path d="M20 5 V18" stroke="#bbb" stroke-width="1"/>
 <path d="M39 5 L51 18 M38 20 L52 5" stroke="#555" stroke-width="1"/><path d="M40 18 L48 8 L51 6 L50 10 L42 19Z" fill="#7ab0e0" stroke="#3a6a9a" stroke-width="0.8"/>
 <path d="M72 6 v14 M75 6 v14 M78 6 v14" stroke="#333" stroke-width="1.6"/><circle cx="82" cy="11" r="3" fill="#fff" stroke="#333" stroke-width="1.2"/>
 <path d="M96 6 h12" stroke="#333" stroke-width="2"/><circle cx="102" cy="14" r="5.5" fill="#9ab0e8" stroke="#333" stroke-width="1"/><path d="M102 14 l2 -4" stroke="#d03030" stroke-width="1"/><path d="M98 20 h8" stroke="#333" stroke-width="1.5"/>
 <path d="M119 8 v12 M133 8 v12 M120 16 h12" stroke="#777" stroke-width="1"/><text x="126" y="12" font-size="7" fill="#555" text-anchor="middle" font-family="Liberation Sans">xx</text>
 <rect x="142.5" y="7.5" width="15" height="10" fill="#f8f8e8" stroke="#444"/><text x="144.5" y="15.5" font-size="7.5" font-weight="bold" fill="#222" textLength="11" lengthAdjust="spacingAndGlyphs" font-family="Liberation Sans">XYZ</text>
 <rect x="12.5" y="30.5" width="11" height="11" fill="#fff" stroke="#9a9a9a"/>
 <rect x="12.5" y="50.5" width="11" height="11" fill="#fff" stroke="#9a9a9a"/>
 <rect x="12.5" y="70.5" width="11" height="11" fill="#fff" stroke="#9a9a9a"/>
 <rect x="12" y="90" width="12" height="12" fill="#2a5a88"/>
 <path d="M14.5 96 L17 99 L22 92.5" fill="none" stroke="#fff" stroke-width="1.8"/>
 <path d="M74 111 V123 L84 123" fill="none" stroke="#2a8aa0" stroke-width="1.4"/><path d="M74 123 L84 120" stroke="#d04040" stroke-width="1.2"/><path d="M74 123 L79 116" stroke="#3a9a3a" stroke-width="1.2"/>
 <path d="M133 117 h6 l-3 4z" fill="#111"/>
</svg>
<div class="t rl" style="left:30px;top:719px;--w:59px">パターンを作成</div>
<div class="t rl" style="left:31px;top:740px;--w:53px">方向を維持</div>
<div class="t rl" style="left:31px;top:760px;--w:53px">最初に分離</div>
<div class="t rl" style="left:30px;top:780px;--w:85px">スケッチの接続を保持</div>
<div class="t rl" style="left:12px;top:802px;color:#888;--w:50px">向きを記憶</div>
<div class="t rl" style="left:89px;top:802px;--w:40px">ディフォルト</div>
<!-- left bottom tabs -->
<div class="a" style="left:6px;top:960px;width:84px;height:22px;background:#f0f0f0;border-left:2px solid #4a6480;border-right:2px solid #4a6480"></div>
<div class="t" style="left:12px;top:964px;color:#3a5a7a;--w:71px">オプション - 移動</div>
<div class="t" style="left:96px;top:964px;--w:24px">選択</div>
<!-- ===== VIEWPORT ===== -->
<div class="a" style="left:244px;top:145px;width:1020px;height:840px;background:#f0f0f0"></div><div class="a" style="left:244px;top:145px;width:991px;height:815px;background:#fff"></div>
<div class="a" style="left:244px;top:149px;width:988px;height:808px;background:#fff;border:1px solid #aca995;border-right-color:#d0cec0;border-bottom-color:#c8c6b4"></div>
<div class="t" style="left:256px;top:159px;color:#505050;font-size:12px;--w:316px">ハンドルをドラッグして、選択されたオブジェクトを移動します</div>
<svg class="a" style="left:244px;top:149px" width="320" height="130">
 <defs>
  <linearGradient id="bg1" x1="0" y1="0" x2="0" y2="1"><stop offset="0" stop-color="#fff"/><stop offset="1" stop-color="#f4f4f4"/></linearGradient>
 </defs>
 <rect x="16.5" y="34.5" width="47" height="47" rx="7" fill="url(#bg1)" stroke="#777" stroke-width="1"/>
 <defs><linearGradient id="cur" x1="0" y1="0" x2="1" y2="1"><stop offset="0" stop-color="#a87a48"/><stop offset="1" stop-color="#6a4418"/></linearGradient></defs>
 <path d="M30,41 L51.5,57.5 L42,60 L49.5,73 L43.5,75.5 L37,62.5 L30,68.5 Z" fill="url(#cur)" stroke="#f8c890" stroke-width="2.2" stroke-linejoin="round"/>
 <path d="M30,41 L51.5,57.5 L42,60 L49.5,73 L43.5,75.5 L37,62.5 L30,68.5 Z" fill="url(#cur)" stroke="#3a2008" stroke-width="0.9" stroke-linejoin="round"/>
 <path d="M32.5,47 L32.5,62" stroke="#d8a868" stroke-width="1.2"/>
 <rect x="80.5" y="32" width="31" height="31.5" rx="6" fill="url(#bg1)" stroke="#777"/>
 <path d="M85 58 L98 46" stroke="#3a7ab0" stroke-width="3.2"/><path d="M85 58 L98 46" stroke="#d8f0fc" stroke-width="1.6"/><path d="M107.5 35.5 L94.5 43.5 L97.5 44.5 L100 49.5Z" fill="#b8e0f4" stroke="#3a7ab0" stroke-width="0.9"/>
 <rect x="143.5" y="32" width="31" height="31.5" rx="6" fill="url(#bg1)" stroke="#777"/>
 <path d="M151 57 Q153 51 159 51 Q163 51 166 43 L168 39" fill="none" stroke="#3a7ab0" stroke-width="3"/><path d="M151 57 Q153 51 159 51 Q163 51 166 43 L168 39" fill="none" stroke="#bfe4f8" stroke-width="1.5"/><path d="M170 35 L162 41 L169 44Z" fill="#a8d8f0" stroke="#3a7ab0" stroke-width="0.8"/>
 <rect x="206.5" y="32" width="31" height="31.5" rx="6" fill="url(#bg1)" stroke="#777"/>
 <path d="M221 47 L214 58 L230 58 Z" fill="#80d8d0" stroke="#2a8a8a" stroke-width="0.8"/>
 <path d="M209 40 L213 37 L235 41 L235 46 L231 49 L209 45Z" fill="#d8a070" stroke="#7a4a20" stroke-width="0.8"/><path d="M209 40 L231 44 L235 41 M231 44 V49" fill="none" stroke="#7a4a20" stroke-width="0.8"/>
 <rect x="269.5" y="32" width="31" height="31.5" rx="6" fill="url(#bg1)" stroke="#777"/>
 <path d="M283 47 L288 44 L295 46 L295 56 L290 59 L283 57Z" fill="#d8a070" stroke="#7a4a20" stroke-width="0.8"/><path d="M283 47 L290 49 L295 46 M290 49 V59" fill="none" stroke="#7a4a20" stroke-width="0.8"/>
 <path d="M274 36 L287 49" stroke="#3a7ab0" stroke-width="3"/><path d="M274 36 L287 49" stroke="#bfe4f8" stroke-width="1.5"/><path d="M290 52 L280 48 L286 43Z" fill="#a8d8f0" stroke="#3a7ab0" stroke-width="0.8"/>
 <rect x="80.5" y="71.5" width="31" height="32" rx="6" fill="url(#bg1)" stroke="#777"/>
 <path d="M86.5 93 L92 82" stroke="#3a9a3a" stroke-width="1.3"/><path d="M94 74 L89.5 84 L94 84.5Z" fill="#b8f0b8" stroke="#2a8a2a" stroke-width="0.7"/>
 <path d="M87 94 L98 99" stroke="#c05050" stroke-width="1.3"/><path d="M106.5 101.5 L96 95 L95.5 100.5Z" fill="#f0b0b0" stroke="#b05050" stroke-width="0.7"/>
 <circle cx="86.5" cy="93.5" r="4" fill="#e8e850" stroke="#a0a020" stroke-width="0.8"/>
 <rect x="143.5" y="71.5" width="31" height="32" rx="6" fill="url(#bg1)" stroke="#777"/>
 <path d="M159 90 V78 M159 90 L150 97 M159 90 L168 97" stroke="#3a7ab0" stroke-width="1.5" stroke-dasharray="2 1"/>
 <path d="M159 75 l-3 5 6 0z M148 99 l2 -5 4 3z M170 99 l-2 -5 -4 3z" fill="#a8d8f0" stroke="#3a7ab0" stroke-width="0.7"/>
 <rect x="269.5" y="71.5" width="31" height="32" rx="6" fill="#fff" stroke="#ddd"/>
 <path d="M280 77 L293 75 L295 89 L282 91Z" fill="#f4e8dc" stroke="#e0d0c0" stroke-width="0.8"/><path d="M287 85 V97 L276 100" fill="none" stroke="#d8e8f4" stroke-width="2"/>
 <rect x="17.5" y="88.5" width="31" height="31" rx="6" fill="url(#bg1)" stroke="#777"/>
 <path d="M23 93 L33 101 L29 102 L31.5 107 L29.5 108 L27 103 L23.5 106Z" fill="#8a8a8a" stroke="#555" stroke-width="0.7"/>
 <path d="M34 104 L38 101 L47 102 L47 113 L43 116 L34 114Z" fill="#e8c0a0" stroke="#e04040" stroke-width="0.9" stroke-dasharray="2 1"/>
 <path d="M34 104 L43 105 L47 102 M43 105 V116" fill="none" stroke="#e04040" stroke-width="0.8"/>
</svg>
<!-- ===== 3D OBJECT ===== -->
<svg class="a" style="left:0;top:0" width="1264" height="1017" viewBox="0 0 1264 1017">
 <g stroke="#3a2204" stroke-width="0.9" stroke-linejoin="round">
  <!-- upper block bottom face (translucent) -->
  <polygon points="618.6,494.8 798.5,455.3 856.3,567.4 677,607.7" fill="#eb8231" stroke="#6a4010" stroke-width="0.8"/>
  <!-- lower block front -->
  <polygon points="619.3,516.1 679.2,503.7 665.4,555.4 691.8,549.1 743.7,488.9 800,477.1 804,722.3 624.3,760.3" fill="#ff9a00"/>
  <polygon points="629.6,514 679.2,503.7 665.4,555.4 691.8,549.1 743.7,488.9 800,477.1 802.3,579.9 677,607.7" fill="#fd8b05" stroke="none"/>
  <!-- lower right face -->
  <polygon points="800,477.1 815.7,509.6 814.3,553.6 824,570 838.4,553.6 857,589.4 862.3,833.7 804,722.3" fill="#cc6700"/>
  <polygon points="800,477.1 815.7,509.6 814.3,553.6 824,570 838.4,553.6 846.5,569.5 802.3,579.9" fill="#d87000" stroke="none"/>
  <polygon points="824,570 838.4,553.6 843.4,609.8" fill="#ff9a00"/>
  <path d="M800,477.1 L815.7,509.6 L814.3,553.6 L824,570 L838.4,553.6 L857,589.4 M824,570 L843.4,609.8 L838.4,553.6" fill="none"/>
  <path d="M618.6,494.8 L677,607.7 L856.3,567.4" fill="none" stroke="#6a4010" stroke-width="0.7"/>
  <path d="M800.6,460 L856.3,567.4" fill="none" stroke-width="0.9"/>
  <!-- lower bottom face -->
  <polygon points="624.3,760.3 804,722.3 862.3,833.7 683.3,873.4" fill="#ee7900"/>
  <!-- upper block front -->
  <polygon points="613.4,250.5 673.5,237.4 659.8,289 686.2,283.4 733.4,224.5 793.2,211.2 798.5,455.3 618.6,494.8" fill="#f58a38"/>
  <polygon points="686.2,283.4 733.4,224.5 749.3,270" fill="#ef8736" stroke="none"/>
  <path d="M733.4,224.5 L749.3,270 L686.2,283.4" fill="none"/>
  <!-- upper right face -->
  <polygon points="793.2,211.2 812.8,248.2 808.9,288.3 817.5,304.1 832.5,286.8 851.8,323.7 856.3,567.4 798.5,455.3" fill="#e47b2a"/>
  <polygon points="817.5,304.1 832.5,286.8 838,343.4" fill="#ee8534"/>
 </g>
 <!-- translucent plane -->
 <polygon points="694,191 720.1,241.1 695.5,271.8" fill="#7070c0" fill-opacity="0.08"/>
 <path d="M694,191 L699.6,475.8" fill="none" stroke="#8080c0" stroke-width="1.2" stroke-opacity="0.85"/>
 <path d="M694,191 L733,264" fill="none" stroke="#8a8ac8" stroke-width="1.2" stroke-opacity="0.85"/>
 <path d="M733,264 L768.8,334.2 L776.7,625.6" fill="none" stroke="#a06a60" stroke-width="1" stroke-opacity="0.35"/>
 <path d="M699.6,475.8 L776.7,625.6" fill="none" stroke="#9a7070" stroke-width="1" stroke-opacity="0.4"/>
 <path d="M735.5,405 V455" stroke="#f0b8a0" stroke-width="2" stroke-opacity="0.7"/>
 <!-- dashed axis line -->
 <path d="M709,474 L715,762" stroke="#4a3a10" stroke-width="1.1" stroke-dasharray="4 3"/>
 <!-- small icon near top -->
 <rect x="705.5" y="231.5" width="19" height="20" rx="4" fill="#fff" stroke="#888" stroke-width="0.8"/>
 <path d="M708 235 L713 238 L713 249 L708 246Z" fill="#f8d0a8" stroke="#6a4a2a" stroke-width="0.8"/>
 <path d="M716 238 L721 235 L721 246 L716 249Z" fill="#3aa83a" stroke="#1a5a1a" stroke-width="0.8"/>
 <path d="M714.5 234 V250" stroke="#333" stroke-width="0.8" stroke-dasharray="1.5 1"/>
 <!-- gizmo -->
 <path d="M759,562 L742,490" stroke="#c83a3a" stroke-width="3.4"/>
 <path d="M742,483 Q786,481 794.5,511" fill="none" stroke="#38c838" stroke-width="4.4"/>
 <circle cx="794.5" cy="511" r="3.4" fill="#38c838"/><circle cx="744" cy="483" r="3.2" fill="#38c838"/>
 <path d="M798,526 Q800,556 762,566" fill="none" stroke="#3a3ad8" stroke-width="4.4"/>
 <circle cx="798" cy="526" r="3.4" fill="#3a3ad8"/><circle cx="762" cy="566" r="3.4" fill="#3a3ad8"/>
 <path d="M741,540 L763,579" stroke="#2aa82a" stroke-width="6"/>
 <path d="M754,577 L770,593 L769,571 Z" fill="#2a9a2a"/>
 <circle cx="762" cy="577" r="4" fill="#3ac83a"/>
 <path d="M744,529.5 L812,516.5" stroke="#d04040" stroke-width="4.8"/>
 <path d="M806,507 L835,511 L809,525 Z" fill="#d04040"/>
 <circle cx="810" cy="516" r="4.5" fill="#d04040"/>
 <path d="M737.5,531 V470" stroke="#2a2ae8" stroke-width="7"/>
 <path d="M735,531 V470" stroke="#4848f8" stroke-width="2"/>
 <path d="M730.5,477 L737.5,452 L744.5,477 Z" fill="#2a2ae8"/>
 <rect x="729.5" y="520.5" width="16.5" height="22" rx="1" fill="#3030c8"/>
 <rect x="729.5" y="520.5" width="16.5" height="11" fill="#5050e0"/>
 <rect x="737" y="520.5" width="3" height="22" fill="#6a6af0" opacity="0.6"/>
 <!-- cursor -->
 <path d="M736,465 L736,480 L739.5,477 L742,483 L744,482 L741.5,476 L746,476 Z" fill="#fff" stroke="#111" stroke-width="0.8"/>
 <!-- lower triad -->
 <path d="M743,797 V768" stroke="#a08080" stroke-width="2.5"/>
 <path d="M739,774 L743,760 L747,774 Z" fill="#5a80e0"/>
 <text x="738" y="755" font-family="Liberation Sans" font-weight="bold" font-size="10" fill="#6a4a9a">Z</text>
 <path d="M743,797 L784,789" stroke="#ff3a10" stroke-width="2"/>
 <path d="M777,785 L791,787.5 L779,793 Z" fill="#ff2a10"/>
 <text x="797" y="789" font-family="Liberation Sans" font-weight="bold" font-size="10" fill="#ff3a10">X</text>
 <path d="M743,797 L756,819" stroke="#5a8a20" stroke-width="2"/>
 <path d="M751,815 L758,826 L759,812 Z" fill="#2a8a1a"/>
 <text x="758" y="837" font-family="Liberation Sans" font-weight="bold" font-size="10" fill="#7a9a20">Y</text>
 <circle cx="743" cy="797" r="2.2" fill="#aaa"/>
</svg>
<!-- triad bottom-left -->
<svg class="a" style="left:280px;top:862px" width="80" height="64">
 <path d="M10 29 L20 22 L33 25 L36 41 L26 51 L13 45 Z" fill="#e4eaf6" stroke="#8a9ac0" stroke-width="0.9" stroke-linejoin="round"/>
 <path d="M10 29 L23 33 L33 25 M23 33 L26 51" fill="none" stroke="#8a9ac0" stroke-width="0.9"/>
 <path d="M23 33 L33 25 L36 41 L26 51 Z" fill="#d4dcee"/>
 <path d="M10 29 L23 33 L26 51 L13 45 Z" fill="#c8d2ea"/>
 <path d="M10 29 L20 22 L33 25 L23 33 Z" fill="#f4f7fc"/>
 <path d="M10 29 L20 22 L33 25 L36 41 L26 51 L13 45 Z M10 29 L23 33 L33 25 M23 33 L26 51" fill="none" stroke="#8a9ac0" stroke-width="0.9"/>
 <ellipse cx="19.5" cy="29.5" rx="3.8" ry="3.3" fill="#1a9a2a"/>
 <ellipse cx="23" cy="44" rx="3.8" ry="3.2" fill="#1a2ae0"/>
 <ellipse cx="34" cy="34" rx="2.2" ry="3.4" fill="#e81a1a"/>
 <path d="M25 24 V18" stroke="#1a2ae0" stroke-width="1.5"/><path d="M22.5 19 L25 14.5 L27.5 19Z" fill="#1a2ae0"/>
 <text x="21" y="15" font-family="Liberation Sans" font-weight="bold" font-size="9.5" fill="#2a2ae0">Z</text>
 <text x="30" y="59" font-family="Liberation Sans" font-weight="bold" font-size="9.5" fill="#2a8a2a">Y</text>
 <path d="M38 32 L52 29" stroke="#e02020" stroke-width="1.6"/><path d="M49 26 L57 28.5 L50 32Z" fill="#e02020"/>
 <text x="59" y="31" font-family="Liberation Sans" font-weight="bold" font-size="9.5" fill="#e02020">X</text>
</svg>
<!-- scale bar -->
<div class="a" style="left:1154px;top:928px;width:62px;height:2px;background:#3a3ac0"></div>
<div class="t ns" style="left:1170px;top:932px;color:#3a3ab0;font-size:10.5px">20mm</div>
<!-- right quick guide -->
<div class="a" style="left:1236px;top:148px;width:21px;height:62px;background:#f4f4f4"></div>
<div class="a" style="left:1237px;top:148px;width:19px;height:26px;background:#fbfbfb"></div>
<div class="a" style="left:1256px;top:148px;width:4px;height:62px;background:#c8c8c8"></div>
<div class="a" style="left:1256px;top:155px;transform-origin:0 0;transform:rotate(90deg)"><div class="t" style="left:0;top:0;font-size:11px;--w:51px">クイックガイド</div></div>
<!-- doc tab bar -->
<div class="a" style="left:238px;top:960px;width:997px;height:25px;background:#f6f6fa"></div>
<div class="a" style="left:241px;top:960px;width:994px;height:1px;background:#6a7480"></div>
<div class="a" style="left:241px;top:960px;width:1px;height:25px;background:#4a6480"></div>
<div class="a" style="left:245px;top:960px;width:72px;height:22px;background:#f4f5fa;border:1px solid #4a6888;border-top:none"></div>
<svg class="a" style="left:248px;top:962px" width="20" height="19">
 <path d="M3 6 L8 3 L11 5 L11 10 L16 8 L18 11 L18 15 L12 18 L4 14 L2 10 Z" fill="#f8d4a8" stroke="#5a3a1a" stroke-width="1"/>
 <path d="M3 6 L6 8 L11 5 M6 8 V12 L11 10 M6 12 L12 15 L18 11 M12 15 V18" fill="none" stroke="#5a3a1a" stroke-width="0.9"/>
 <path d="M12 15 L18 11 L18 15 L12 18 Z" fill="#e0b080"/>
</svg>
<div class="t ns" style="left:268px;top:965px;font-weight:bold;color:#3a5474;font-size:12.5px;--w:33px">test1*</div>
<svg class="a" style="left:302px;top:965px" width="12" height="12"><path d="M2.5 2.5 L9.5 9.5 M9.5 2.5 L2.5 9.5" stroke="#555" stroke-width="1.6"/></svg>
<svg class="a" style="left:1192px;top:963px" width="42" height="14">
 <path d="M8.5 3 L4 7 L8.5 11 Z" fill="none" stroke="#333" stroke-width="1"/>
 <path d="M18 3 L22.5 7 L18 11 Z" fill="none" stroke="#333" stroke-width="1"/>
 <path d="M31 3.5 L38 10.5 M38 3.5 L31 10.5" stroke="#333" stroke-width="1.6"/>
</svg>
<!-- status bar -->
<div class="a" style="left:0;top:982px;width:1235px;height:3px;background:#f7f7fb"></div>
<div class="a" style="left:0;top:985px;width:1264px;height:32px;background:#2e5c88"></div>
<div class="t" style="left:9px;top:996px;color:#fff;font-size:11px;--w:238px">ハンドルをドラッグして、選択されたオブジェクトを移動します</div>
<div class="a" style="left:523px;top:990px;width:1px;height:23px;background:#5a80a8"></div>
<div class="a" style="left:738px;top:990px;width:1px;height:23px;background:#5a80a8"></div>
<div class="a" style="left:839px;top:990px;width:1px;height:23px;background:#5a80a8"></div>
<div class="a" style="left:674px;top:988px;width:29px;height:27px;background:#d9a0ae"></div>
<svg class="a" style="left:674px;top:985px" width="590" height="32">
 <path d="M10 10 L14 6 L19 6 L23 10 L23 15 L19 19 L14 19 L10 15 Z" transform="translate(-2,4)" fill="#e01818" stroke="#fff" stroke-width="1.2"/>
 <circle cx="41" cy="17" r="6" fill="#d81818"/>
 <rect x="40" y="12.5" width="2" height="5.5" fill="#fff"/><rect x="40" y="19.5" width="2" height="2" fill="#fff"/>
 <path d="M52 19 L56 14 L60 19 Z" fill="#fff"/>
 <path d="M322 13 l4 -5 4 5z M322 21 l4 5 4 -5z" fill="#6a88a8"/>
 <path d="M338 10 V24 L341 21 L344 26 L346 25 L343 20 L347 20 Z" fill="#fff" stroke="#111" stroke-width="0.8"/>
 <path d="M345 12 Q352 10 352 16 Q352 21 347 22" fill="none" stroke="#8ac0f0" stroke-width="2"/><path d="M343 10 l4 -3 0 6z" fill="#8ac0f0"/>
 <path d="M364 10 V23 L367 20 L370 25 L372 24 L369 19 L373 19 Z" fill="#fff" stroke="#111" stroke-width="0.8"/>
 <path d="M378 20 l4 -5 4 5z" fill="#fff"/>
 <rect x="397" y="11" width="13" height="12" fill="none" stroke="#9ac8f0" stroke-width="1.6" stroke-dasharray="2.5 1.5"/>
 <path d="M415 20 l4 -5 4 5z" fill="#fff"/>
 <rect x="427" y="8" width="1" height="20" fill="#5a80a8"/>
 <path d="M433 17 h15 M440.5 10 v14" stroke="#8ac0f0" stroke-width="2.2"/><circle cx="440.5" cy="17" r="4" fill="none" stroke="#8ac0f0" stroke-width="2"/>
 <path d="M451 20 l4 -5 4 5z" fill="#fff"/>
 <path d="M466 17 h16 M474 9 v16" stroke="#8ac0f0" stroke-width="2"/><path d="M474 8 l-3 4 6 0z M474 26 l-3 -4 6 0z M465 17 l4 -3 0 6z M483 17 l-4 -3 0 6z" fill="#8ac0f0"/>
 <circle cx="496" cy="15" r="5" fill="none" stroke="#8ac0f0" stroke-width="2.5"/><path d="M499.5 18.5 L504 23" stroke="#8ac0f0" stroke-width="3"/>
 <path d="M510 20 l4 -5 4 5z" fill="#fff"/>
 <path d="M540 10 L528 22" stroke="#6aaae8" stroke-width="3"/><path d="M526 24 L527 15 L535 23Z" fill="#6aaae8"/>
 <path d="M552 22 L564 10" stroke="#7a9ab8" stroke-width="3"/><path d="M566 8 L557 9 L565 17Z" fill="#7a9ab8"/>
</svg>
<div class="t" style="left:896px;top:996px;color:#fff;font-size:11px;--w:38px">1ボディ</div>
<script>
(function(){
 var els=document.querySelectorAll('.t');
 for(var i=0;i<els.length;i++){
  var e=els[i]; var w=getComputedStyle(e).getPropertyValue('--w');
  if(!w) continue; w=parseFloat(w); if(!w) continue;
  var n=e.offsetWidth; if(!n) continue;
  e.style.transformOrigin='0 0'; e.style.transform='scaleX('+(w/n)+')';
 }
})();
</script>
</body></html>
